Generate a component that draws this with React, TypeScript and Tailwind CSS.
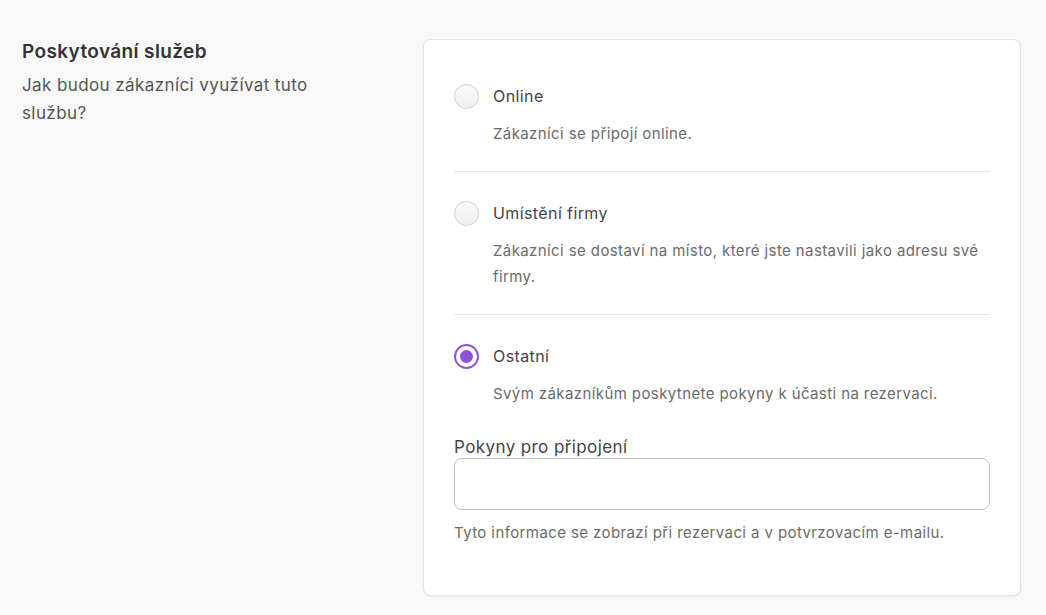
const FONT = "font-['Inter','Noto_Sans',sans-serif]";

type Option = { id: string; label: string; desc: string };

const OPTIONS: Option[] = [
  { id: "online", label: "Online", desc: "Zákazníci se připojí online." },
  {
    id: "business",
    label: "Umístění firmy",
    desc: "Zákazníci se dostaví na místo, které jste nastavili jako adresu své firmy.",
  },
  { id: "other", label: "Ostatní", desc: "Svým zákazníkům poskytnete pokyny k účasti na rezervaci." },
];

function Radio({ checked }: { checked: boolean }) {
  if (checked) {
    return (
      <span className="w-[25px] h-[25px] rounded-full border-2 border-[#8e52d8] bg-white flex items-center justify-center shrink-0">
        <span className="w-[13px] h-[13px] rounded-full bg-[#8e52d8]" />
      </span>
    );
  }
  return (
    <span className="w-[25px] h-[25px] rounded-full border border-[#cfcfcf] bg-gradient-to-b from-[#fafafa] to-[#efefef] shrink-0" />
  );
}

export default function App() {
  const selected = "other";
  return (
    <div className={`min-h-screen bg-[#f8f8f8] ${FONT} tracking-[0.025em] flex pt-[39px] pl-[22px] pr-[25px]`}>
      <div className="w-[340px] shrink-0 pt-[1px]">
        <h2 className="text-[19px] leading-[24px] font-semibold text-[#333] tracking-[0.02em]">Poskytování služeb</h2>
        <p className="mt-[7px] max-w-[320px] text-[17px] leading-[28px] text-[#555]">
          Jak budou zákazníci využívat tuto službu?
        </p>
      </div>
      <div className="ml-[61px] w-[598px] h-[557px] bg-white border border-[#e3e3e3] rounded-lg shadow-[0_1px_3px_rgba(0,0,0,0.06)] px-[30px] pt-[44px]">
        {OPTIONS.map((o, i) => (
          <div
            key={o.id}
            className={`${i > 0 ? "pt-[29px]" : ""} ${i < OPTIONS.length - 1 ? "pb-[24px] border-b border-[#e8e8e8]" : ""}`}
          >
            <div className="flex items-center gap-[14px] h-6">
              <Radio checked={o.id === selected} />
              <span className="text-[16px] text-[#444]">{o.label}</span>
            </div>
            <p className="mt-[13px] pl-[39px] pr-2 text-[15px] leading-[26px] text-[#6b6b6b]">{o.desc}</p>
          </div>
        ))}
        <label className="block mt-[30px] text-[17px] leading-[20px] text-[#444]">Pokyny pro připojení</label>
        <input className="mt-[1px] block w-full h-[52px] rounded-lg border border-[#c0c0c0] px-3 outline-none" />
        <p className="mt-[11px] text-[15px] leading-[24px] text-[#6b6b6b]">
          Tyto informace se zobrazí při rezervaci a v potvrzovacím e-mailu.
        </p>
      </div>
    </div>
  );
}
